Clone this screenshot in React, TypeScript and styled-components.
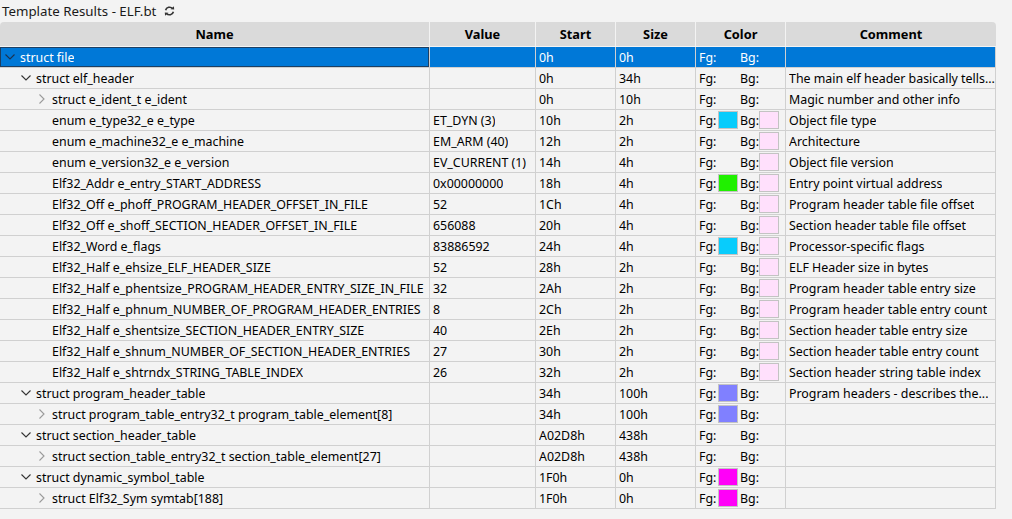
import React from "react";
import styled, { createGlobalStyle } from "styled-components";

const GlobalStyle = createGlobalStyle`
  html, body {
    margin: 0;
    padding: 0;
    background: #f3f3f3;
  }
  body {
    font-family: "Noto Sans", "Open Sans", "DejaVu Sans", sans-serif;
    font-size: 12.4px;
    color: #000;
  }
`;

const COLS = "430px 106px 80px 80px 90px 210px";

const Page = styled.div`
  width: 1012px;
  height: 519px;
  overflow: hidden;
  background: #f3f3f3;
`;

const TitleBar = styled.div`
  height: 22px;
  display: flex;
  align-items: center;
  gap: 8px;
  padding-left: 2px;
  font-size: 13.3px;
  color: #1a1a1a;
`;

const Table = styled.div`
  width: 996px;
  display: flex;
  flex-direction: column;
`;

const HeaderRow = styled.div`
  display: grid;
  grid-template-columns: ${COLS};
  height: 25px;
  border-bottom: 1px solid #f3f3f3;
  box-sizing: border-box;
  border-radius: 4px 4px 0 0;
  overflow: hidden;
`;

const HeaderCell = styled.div`
  background: #dadada;
  border-right: 1px solid #f3f3f3;
  font-weight: 700;
  display: flex;
  align-items: center;
  justify-content: center;
  font-size: 12.8px;
  &:last-child {
    border-right: none;
  }
`;

const Row = styled.div<{ $selected?: boolean }>`
  display: grid;
  grid-template-columns: ${COLS};
  height: 21px;
  background: ${(p) => (p.$selected ? "#0078d7" : "#f3f3f3")};
  color: ${(p) => (p.$selected ? "#ffffff" : "#000")};
`;

const Cell = styled.div<{ $focus?: boolean }>`
  box-sizing: border-box;
  border-right: 1px solid #d0d0d0;
  border-bottom: 1px solid #d0d0d0;
  padding-left: 3px;
  display: flex;
  align-items: center;
  white-space: nowrap;
  overflow: hidden;
  min-width: 0;
  box-shadow: ${(p) => (p.$focus ? "inset 0 0 0 1px #1c3f63" : "none")};
`;

const NameCell = styled(Cell)<{ $level: number }>`
  padding-left: ${(p) => 2 + p.$level * 16}px;
`;

const ChevronBox = styled.span`
  width: 16px;
  flex: 0 0 16px;
  height: 100%;
  display: flex;
  align-items: center;
  justify-content: center;
  margin-right: 2px;
`;

const Text = styled.span`
  overflow: hidden;
  text-overflow: ellipsis;
  white-space: nowrap;
`;

const ColorLabel = styled.span`
  width: 19px;
  flex: 0 0 19px;
`;

const SwatchSlot = styled.span`
  width: 22px;
  flex: 0 0 22px;
  display: flex;
  align-items: center;
`;

const Swatch = styled.span<{ $color: string }>`
  box-sizing: border-box;
  width: 20px;
  height: 18px;
  background: ${(p) => p.$color};
  border: 1px solid #c3c3c3;
  margin-top: -1px;
`;

type RowData = {
  name: string;
  level: number;
  kind: "open" | "closed" | "leaf";
  value?: string;
  start: string;
  size: string;
  fg?: string;
  bg?: string;
  comment?: string;
  selected?: boolean;
};

const CYAN = "#08ccfc";
const GREEN = "#20f000";
const PINK = "#ffe0fc";
const PURPLE = "#8080ff";
const MAGENTA = "#ff00f8";

const rows: RowData[] = [
  { name: "struct file", level: 0, kind: "open", start: "0h", size: "0h", selected: true },
  { name: "struct elf_header", level: 1, kind: "open", start: "0h", size: "34h", comment: "The main elf header basically tells..." },
  { name: "struct e_ident_t e_ident", level: 2, kind: "closed", start: "0h", size: "10h", comment: "Magic number and other info" },
  { name: "enum e_type32_e e_type", level: 2, kind: "leaf", value: "ET_DYN (3)", start: "10h", size: "2h", fg: CYAN, bg: PINK, comment: "Object file type" },
  { name: "enum e_machine32_e e_machine", level: 2, kind: "leaf", value: "EM_ARM (40)", start: "12h", size: "2h", bg: PINK, comment: "Architecture" },
  { name: "enum e_version32_e e_version", level: 2, kind: "leaf", value: "EV_CURRENT (1)", start: "14h", size: "4h", bg: PINK, comment: "Object file version" },
  { name: "Elf32_Addr e_entry_START_ADDRESS", level: 2, kind: "leaf", value: "0x00000000", start: "18h", size: "4h", fg: GREEN, bg: PINK, comment: "Entry point virtual address" },
  { name: "Elf32_Off e_phoff_PROGRAM_HEADER_OFFSET_IN_FILE", level: 2, kind: "leaf", value: "52", start: "1Ch", size: "4h", bg: PINK, comment: "Program header table file offset" },
  { name: "Elf32_Off e_shoff_SECTION_HEADER_OFFSET_IN_FILE", level: 2, kind: "leaf", value: "656088", start: "20h", size: "4h", bg: PINK, comment: "Section header table file offset" },
  { name: "Elf32_Word e_flags", level: 2, kind: "leaf", value: "83886592", start: "24h", size: "4h", fg: CYAN, bg: PINK, comment: "Processor-specific flags" },
  { name: "Elf32_Half e_ehsize_ELF_HEADER_SIZE", level: 2, kind: "leaf", value: "52", start: "28h", size: "2h", bg: PINK, comment: "ELF Header size in bytes" },
  { name: "Elf32_Half e_phentsize_PROGRAM_HEADER_ENTRY_SIZE_IN_FILE", level: 2, kind: "leaf", value: "32", start: "2Ah", size: "2h", bg: PINK, comment: "Program header table entry size" },
  { name: "Elf32_Half e_phnum_NUMBER_OF_PROGRAM_HEADER_ENTRIES", level: 2, kind: "leaf", value: "8", start: "2Ch", size: "2h", bg: PINK, comment: "Program header table entry count" },
  { name: "Elf32_Half e_shentsize_SECTION_HEADER_ENTRY_SIZE", level: 2, kind: "leaf", value: "40", start: "2Eh", size: "2h", bg: PINK, comment: "Section header table entry size" },
  { name: "Elf32_Half e_shnum_NUMBER_OF_SECTION_HEADER_ENTRIES", level: 2, kind: "leaf", value: "27", start: "30h", size: "2h", bg: PINK, comment: "Section header table entry count" },
  { name: "Elf32_Half e_shtrndx_STRING_TABLE_INDEX", level: 2, kind: "leaf", value: "26", start: "32h", size: "2h", bg: PINK, comment: "Section header string table index" },
  { name: "struct program_header_table", level: 1, kind: "open", start: "34h", size: "100h", fg: PURPLE, comment: "Program headers - describes the..." },
  { name: "struct program_table_entry32_t program_table_element[8]", level: 2, kind: "closed", start: "34h", size: "100h", fg: PURPLE },
  { name: "struct section_header_table", level: 1, kind: "open", start: "A02D8h", size: "438h" },
  { name: "struct section_table_entry32_t section_table_element[27]", level: 2, kind: "closed", start: "A02D8h", size: "438h" },
  { name: "struct dynamic_symbol_table", level: 1, kind: "open", start: "1F0h", size: "0h", fg: MAGENTA },
  { name: "struct Elf32_Sym symtab[188]", level: 2, kind: "closed", start: "1F0h", size: "0h", fg: MAGENTA },
];

const Chevron: React.FC<{ kind: RowData["kind"]; selected?: boolean }> = ({ kind, selected }) => {
  if (kind === "leaf") return null;
  if (kind === "open") {
    return (
      <svg width="10" height="6" viewBox="0 0 10 6">
        <polyline points="0.5,0.5 5,5 9.5,0.5" fill="none" stroke={selected ? "#1b3350" : "#333"} strokeWidth="1.1" />
      </svg>
    );
  }
  return (
    <svg width="6" height="10" viewBox="0 0 6 10">
      <polyline points="0.5,0.5 5,5 0.5,9.5" fill="none" stroke="#9a9a9a" strokeWidth="1.1" />
    </svg>
  );
};

const RefreshIcon = () => (
  <svg width="11" height="10" viewBox="0 0 11 10">
    <path d="M1.6 4.2 A4 3.8 0 0 1 8.6 2.6" fill="none" stroke="#333" strokeWidth="1.6" />
    <polygon points="6.6,3.2 10.2,3.6 9.9,0.2" fill="#333" />
    <path d="M9.4 5.8 A4 3.8 0 0 1 2.4 7.4" fill="none" stroke="#333" strokeWidth="1.6" />
    <polygon points="4.4,6.8 0.8,6.4 1.1,9.8" fill="#333" />
  </svg>
);

const ColorCell: React.FC<{ fg?: string; bg?: string }> = ({ fg, bg }) => (
  <Cell>
    <ColorLabel>Fg:</ColorLabel>
    <SwatchSlot>{fg && <Swatch $color={fg} />}</SwatchSlot>
    <ColorLabel>Bg:</ColorLabel>
    <SwatchSlot>{bg && <Swatch $color={bg} />}</SwatchSlot>
  </Cell>
);

export default function App() {
  return (
    <Page>
      <GlobalStyle />
      <TitleBar>
        <span>Template Results - ELF.bt</span>
        <RefreshIcon />
      </TitleBar>
      <Table>
        <HeaderRow>
          <HeaderCell>Name</HeaderCell>
          <HeaderCell>Value</HeaderCell>
          <HeaderCell>Start</HeaderCell>
          <HeaderCell>Size</HeaderCell>
          <HeaderCell>Color</HeaderCell>
          <HeaderCell>Comment</HeaderCell>
        </HeaderRow>
        {rows.map((r, i) => (
          <Row key={i} $selected={r.selected}>
            <NameCell $level={r.level} $focus={r.selected}>
              <ChevronBox>
                <Chevron kind={r.kind} selected={r.selected} />
              </ChevronBox>
              <Text>{r.name}</Text>
            </NameCell>
            <Cell>
              <Text>{r.value ?? ""}</Text>
            </Cell>
            <Cell>
              <Text>{r.start}</Text>
            </Cell>
            <Cell>
              <Text>{r.size}</Text>
            </Cell>
            <ColorCell fg={r.fg} bg={r.bg} />
            <Cell>
              <Text>{r.comment ?? ""}</Text>
            </Cell>
          </Row>
        ))}
      </Table>
    </Page>
  );
}
